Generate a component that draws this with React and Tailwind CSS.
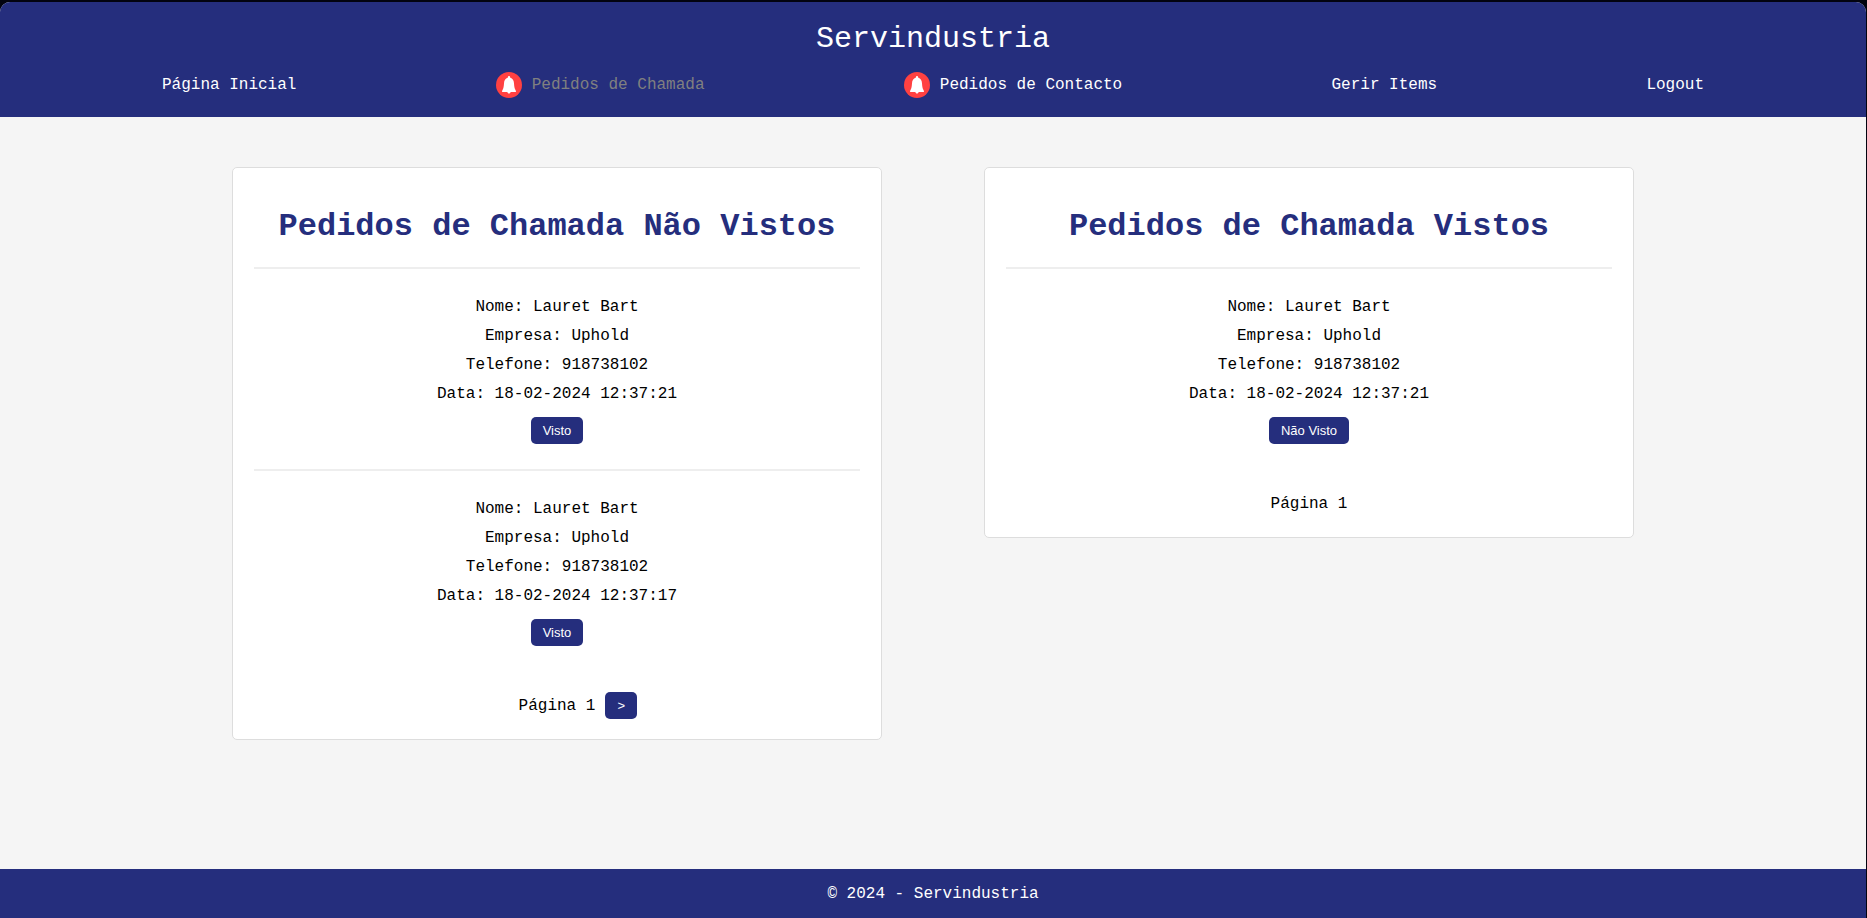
const navItems = [
  { label: 'Página Inicial' },
  { label: 'Pedidos de Chamada', alert: true, current: true },
  { label: 'Pedidos de Contacto', alert: true },
  { label: 'Gerir Items' },
  { label: 'Logout' },
];

const unseen = [
  { nome: 'Lauret Bart', empresa: 'Uphold', telefone: '918738102', data: '18-02-2024 12:37:21' },
  { nome: 'Lauret Bart', empresa: 'Uphold', telefone: '918738102', data: '18-02-2024 12:37:17' },
];

const seen = [unseen[0]];

function AlertIcon() {
  return (
    <svg viewBox="0 0 26 26" className="size-[26px] shrink-0" aria-hidden="true">
      <circle cx="13" cy="13" r="13" fill="#ff4141" />
      <path
        fill="#fff"
        d="M13 3.9c.6 0 1 .5 1.100 1.200l.2.700c2.400.7 3.500 2.700 3.700 5.400.2 3.100.5 5.200 1.500 6.900.3.500.4.800.4 1.200v.7h-5.200c-.2.900-.8 1.500-1.700 1.500s-1.500-.6-1.700-1.500H6.100v-.7c0-.4.1-.7.4-1.200 1-1.700 1.300-3.800 1.500-6.900.2-2.700 1.300-4.700 3.700-5.400l.2-.7c.1-.7.5-1.200 1.100-1.200z"
      />
    </svg>
  );
}

function ActionButton({ children, ...props }) {
  return (
    <button
      type="button"
      className="h-[27px] cursor-pointer rounded-[5px] bg-[#252e7d] px-[12px] font-['Liberation_Sans',Arial,sans-serif] text-[13px] leading-[15px] text-white"
      {...props}
    >
      {children}
    </button>
  );
}

function RequestList({ title, requests, action, hasNext }) {
  return (
    <section className="rounded-[5px] border border-[#dddddd] bg-white px-[21px] py-[20px] text-center text-black">
      <h1 className="mt-[21px] mb-[22px] text-[32px] leading-[36px] font-bold text-[#252e7d]">{title}</h1>
      {requests.map((request) => (
        <article key={request.data} className="border-t-2 border-[#eeeeee] pt-[24px] pb-[25px]">
          <div className="mb-[8px] leading-[29px]">
            <p>Nome: {request.nome}</p>
            <p>Empresa: {request.empresa}</p>
            <p>Telefone: {request.telefone}</p>
            <p>Data: {request.data}</p>
          </div>
          <ActionButton>{action}</ActionButton>
        </article>
      ))}
      <div className="mt-[21px] grid min-h-[27px] grid-cols-[1fr_auto_1fr] items-center gap-[10px]">
        <span className="col-start-2">Página 1</span>
        {hasNext && (
          <div className="flex">
            <ActionButton aria-label="Página seguinte">&gt;</ActionButton>
          </div>
        )}
      </div>
    </section>
  );
}

export default function App() {
  return (
    <div className="min-h-screen bg-[#02030f] pt-[2px] pr-px font-['Liberation_Mono','Courier_New',monospace] text-[16px] leading-[18px]">
      <div className="flex min-h-[calc(100vh-2px)] flex-col overflow-hidden rounded-t-[10px] bg-[#f5f5f5]">
        <header className="bg-[#252e7d] pt-[20px] pb-[19px] text-white">
          <div className="text-center text-[30px] leading-[34px]">Servindustria</div>
          <nav className="mt-[16px] flex items-center justify-between px-[162px]">
            {navItems.map((item) => (
              <a
                key={item.label}
                href="#"
                aria-current={item.current ? 'page' : undefined}
                className={`flex items-center gap-[10px] ${item.alert ? '-ml-[10px]' : ''} ${item.current ? 'text-[#808080]' : 'text-white'}`}
              >
                {item.alert && <AlertIcon />}
                {item.label}
              </a>
            ))}
          </nav>
        </header>
        <main className="grid flex-1 grid-cols-2 items-start gap-[102px] px-[232px] py-[50px]">
          <RequestList title="Pedidos de Chamada Não Vistos" requests={unseen} action="Visto" hasNext />
          <RequestList title="Pedidos de Chamada Vistos" requests={seen} action="Não Visto" />
        </main>
        <footer className="bg-[#252e7d] pt-[16px] pb-[15px] text-center text-white">© 2024 - Servindustria</footer>
      </div>
    </div>
  );
}
